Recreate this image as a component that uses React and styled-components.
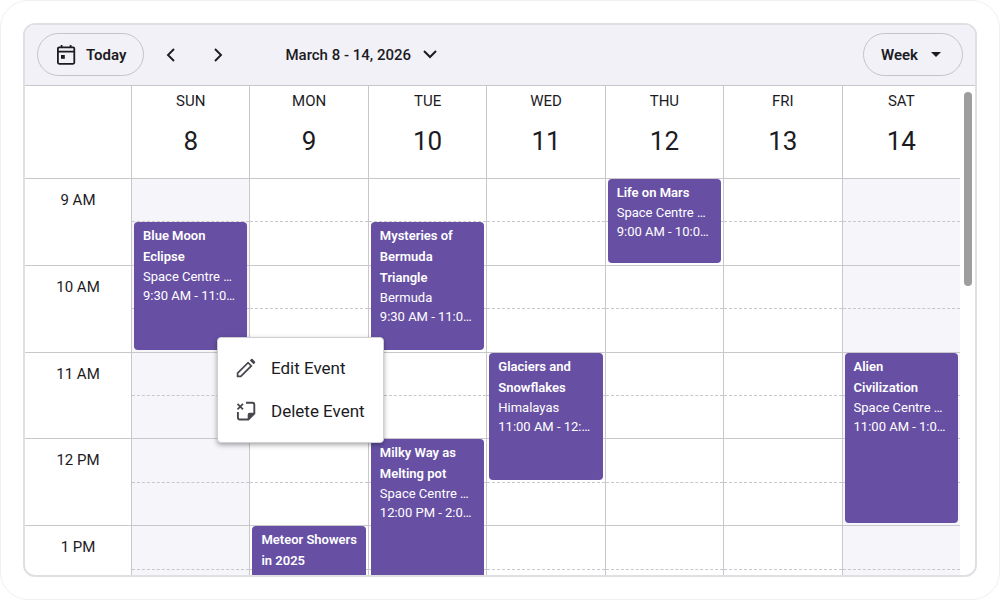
import styled, { createGlobalStyle } from "styled-components";

const HOURS = ["9 AM", "10 AM", "11 AM", "12 PM", "1 PM"];

// start and span are counted in half hours from 9 AM
const DAYS = [
  {
    name: "SUN",
    date: 8,
    weekend: true,
    events: [
      { title: "Blue Moon Eclipse", place: "Space Centre Galaxy", time: "9:30 AM - 11:00 AM", start: 1, span: 3 },
    ],
  },
  {
    name: "MON",
    date: 9,
    events: [
      { title: "Meteor Showers in 2025", place: "Space Centre Galaxy", time: "1:00 PM - 2:30 PM", start: 8, span: 2 },
    ],
  },
  {
    name: "TUE",
    date: 10,
    events: [
      { title: "Mysteries of Bermuda Triangle", place: "Bermuda", time: "9:30 AM - 11:00 AM", start: 1, span: 3 },
      { title: "Milky Way as Melting pot", place: "Space Centre Galaxy", time: "12:00 PM - 2:00 PM", start: 6, span: 4 },
    ],
  },
  {
    name: "WED",
    date: 11,
    events: [
      { title: "Glaciers and Snowflakes", place: "Himalayas", time: "11:00 AM - 12:30 PM", start: 4, span: 3 },
    ],
  },
  {
    name: "THU",
    date: 12,
    events: [
      { title: "Life on Mars", place: "Space Centre Galaxy", time: "9:00 AM - 10:00 AM", start: 0, span: 2 },
    ],
  },
  { name: "FRI", date: 13, events: [] },
  {
    name: "SAT",
    date: 14,
    weekend: true,
    events: [
      { title: "Alien Civilization", place: "Space Centre Galaxy", time: "11:00 AM - 1:00 PM", start: 4, span: 4 },
    ],
  },
];

function App() {
  return (
    <>
      <GlobalStyle />
      <StPage>
        <StCalendar>
          <StToolbar>
            <StPillButton>
              <TodayIcon />
              Today
            </StPillButton>
            <StNav>
              <StIconButton aria-label="Previous week">
                <Chevron d="M8 1 2 7l6 6" />
              </StIconButton>
              <StIconButton aria-label="Next week">
                <Chevron d="M2 1l6 6-6 6" />
              </StIconButton>
            </StNav>
            <StRangeButton>
              March 8 - 14, 2026
              <svg width="14" height="10" viewBox="0 0 14 10" fill="none" stroke="currentColor" strokeWidth="2">
                <path d="M1 1l6 6 6-6" />
              </svg>
            </StRangeButton>
            <StPillButton $end>
              Week
              <svg width="10" height="5" viewBox="0 0 10 5" fill="currentColor">
                <path d="M0 0h10L5 5z" />
              </svg>
            </StPillButton>
          </StToolbar>

          <StBody>
            <StSchedule>
              <StHeaderRow>
                <StCorner />
                {DAYS.map((day) => (
                  <StDayHeader key={day.name}>
                    <StDayName>{day.name}</StDayName>
                    <StDayNumber>{day.date}</StDayNumber>
                  </StDayHeader>
                ))}
              </StHeaderRow>
              <StWeek>
                <StHours>
                  {HOURS.map((hour) => (
                    <StHour key={hour}>{hour}</StHour>
                  ))}
                </StHours>
                {DAYS.map((day) => (
                  <DayColumn key={day.name} day={day} />
                ))}
              </StWeek>
            </StSchedule>
            <StScrollTrack>
              <StScrollThumb />
            </StScrollTrack>
          </StBody>

          <StMenu role="menu">
            <StMenuItem role="menuitem">
              <EditIcon />
              Edit Event
            </StMenuItem>
            <StMenuItem role="menuitem">
              <DeleteIcon />
              Delete Event
            </StMenuItem>
          </StMenu>
        </StCalendar>
      </StPage>
    </>
  );
}

export default App;

function DayColumn({ day }) {
  return (
    <StDayColumn $weekend={day.weekend}>
      {HOURS.flatMap((hour, i) => [
        <StSlot key={hour} $row={i * 2 + 1} $half />,
        <StSlot key={hour + "30"} $row={i * 2 + 2} />,
      ])}
      {day.events.map((event) => (
        <StEvent key={event.title} $start={event.start + 1} $span={event.span}>
          <StEventTitle>{event.title}</StEventTitle>
          <StEventText>{event.place}</StEventText>
          <StEventText>{event.time}</StEventText>
        </StEvent>
      ))}
    </StDayColumn>
  );
}

function Chevron({ d }) {
  return (
    <svg width="10" height="14" viewBox="0 0 10 14" fill="none" stroke="currentColor" strokeWidth="1.9">
      <path d={d} />
    </svg>
  );
}

function TodayIcon() {
  return (
    <svg width="20" height="22" viewBox="0 0 20 22" fill="none" stroke="currentColor" strokeWidth="1.8">
      <rect x="1.9" y="3.4" width="16.4" height="16.4" rx="1.2" />
      <path d="M1.9 7.600h16.400M5.600 1v3M14.600 1v3" />
      <rect x="5" y="11" width="3.800" height="3.800" fill="currentColor" stroke="none" />
    </svg>
  );
}

function EditIcon() {
  return (
    <svg width="20" height="20" viewBox="0 0 20 20" fill="none" stroke="currentColor" strokeWidth="1.7">
      <path d="M1.600 18.400v-3.200L12.100 4.700l3.200 3.200L4.800 18.400z" />
      <path
        d="M13.800 2.400l1.300-1.300a1 1 0 0 1 1.400 0l2.400 2.400a1 1 0 0 1 0 1.400l-1.300 1.300z"
        fill="currentColor"
        stroke="none"
      />
    </svg>
  );
}

function DeleteIcon() {
  return (
    <svg width="20" height="20" viewBox="0 0 20 20" fill="none" stroke="currentColor" strokeWidth="1.9">
      <path d="M10 1.800h6.500a1.800 1.800 0 0 1 1.800 1.800V12.500l-6 6H3.700a1.800 1.800 0 0 1-1.800-1.800V11" />
      <path d="M1.500 2.800l5.500 5.500M7 2.800L1.500 8.300" strokeWidth="1.700" />
      <path d="M11.700 18.500V13.800a2 2 0 0 1 2-2h4.600z" fill="currentColor" stroke="none" />
    </svg>
  );
}

const GlobalStyle = createGlobalStyle`
  * {
    box-sizing: border-box;
  }
  body {
    margin: 0;
    background-color: #fff;
    color: #1c1b1f;
    font-family: Roboto, sans-serif;
  }
  button {
    border: none;
    padding: 0;
    background: none;
    color: inherit;
    font-family: inherit;
    cursor: pointer;
  }
`;

const StPage = styled.main`
  height: 100vh;
  min-height: 400px;
  padding: 22px;
  border: 1px solid #f0f0f0;
  border-radius: 28px;
`;

const StCalendar = styled.section`
  position: relative;
  height: 100%;
  display: flex;
  flex-direction: column;
  border: 2px solid #dfe0e4;
  border-radius: 12px;
  overflow: hidden;
`;

const StToolbar = styled.header`
  display: flex;
  align-items: center;
  flex-shrink: 0;
  height: 61px;
  padding: 0 12px 1px;
  background-color: #f2f1f8;
  border-bottom: 1px solid #c8c7cb;
`;

const StPillButton = styled.button`
  display: flex;
  align-items: center;
  gap: ${(props) => (props.$end ? "13px" : "10px")};
  height: 43px;
  margin-left: ${(props) => (props.$end ? "auto" : "0")};
  padding: ${(props) => (props.$end ? "0 21px 0 17px" : "0 17px 0 18px")};
  border: 1px solid #c4c3c8;
  border-radius: 22px;
  font-size: 15px;
  font-weight: 600;
`;

const StNav = styled.nav`
  display: flex;
  gap: 15px;
  margin-left: 11px;
`;

const StIconButton = styled.button`
  display: flex;
  align-items: center;
  justify-content: center;
  width: 32px;
  height: 32px;
`;

const StRangeButton = styled.button`
  display: flex;
  align-items: center;
  gap: 12px;
  height: 32px;
  margin-left: 51px;
  font-size: 15px;
  font-weight: 500;
`;

const StBody = styled.div`
  display: flex;
  flex: 1;
  min-height: 0;
`;

const StSchedule = styled.div`
  flex: 1;
  min-width: 0;
  overflow: hidden;
`;

const StHeaderRow = styled.div`
  display: grid;
  grid-template-columns: 106px repeat(7, minmax(0, 1fr));
  height: 93px;
  border-bottom: 1px solid #c8c7cb;
`;

const StWeek = styled.div`
  display: grid;
  grid-template-columns: 106px repeat(7, minmax(0, 1fr));
  grid-template-rows: 434px;
`;

const StCorner = styled.div`
  background-color: #fff;
`;

const StDayHeader = styled.div`
  display: flex;
  flex-direction: column;
  align-items: center;
  padding-top: 5px;
  border-left: 1px solid #c8c7cb;
`;

const StDayName = styled.span`
  font-size: 15px;
  line-height: 20px;
`;

const StDayNumber = styled.span`
  margin-top: 12px;
  font-size: 26px;
  line-height: 36px;
`;

const StHours = styled.div`
  display: grid;
  grid-template-rows: repeat(5, minmax(0, 1fr));
`;

const StHour = styled.div`
  padding-top: 11px;
  border-bottom: 1px solid #c8c7cb;
  font-size: 15px;
  line-height: 20px;
  text-align: center;
`;

const StDayColumn = styled.div`
  display: grid;
  grid-template-columns: minmax(0, 1fr);
  grid-template-rows: repeat(10, minmax(0, 1fr));
  border-left: 1px solid #c8c7cb;
  background-color: ${(props) => (props.$weekend ? "#f6f5fa" : "#fff")};
`;

const StSlot = styled.div`
  grid-column: 1;
  grid-row: ${(props) => props.$row};
  border-bottom: 1px ${(props) => (props.$half ? "dashed" : "solid")} #c8c7cb;
`;

const StEvent = styled.article`
  grid-column: 1;
  grid-row: ${(props) => props.$start} / span ${(props) => props.$span};
  margin: 0 2px 3px;
  padding: 3px 8px 0 9px;
  border-radius: 4px;
  background-color: #6750a4;
  color: #fff;
  overflow: hidden;
`;

const StEventTitle = styled.h3`
  margin: 0;
  font-size: 13px;
  font-weight: 600;
  line-height: 21px;
`;

const StEventText = styled.p`
  margin: 0;
  font-size: 13px;
  line-height: 19px;
  white-space: nowrap;
  overflow: hidden;
  text-overflow: ellipsis;
`;

const StScrollTrack = styled.div`
  width: 15px;
  padding: 6px 3px 0 4px;
`;

const StScrollThumb = styled.div`
  height: 194px;
  border-radius: 4px;
  background-color: #9e9e9e;
`;

const StMenu = styled.div`
  position: absolute;
  top: 312px;
  left: 192px;
  display: flex;
  flex-direction: column;
  padding: 8px 0 10px;
  border: 1px solid #d0d0d4;
  border-radius: 4px;
  background-color: #fff;
  box-shadow: 0 2px 5px rgba(0, 0, 0, 0.35);
`;

const StMenuItem = styled.button`
  display: flex;
  align-items: center;
  gap: 15px;
  height: 43px;
  padding: 0 18px;
  font-size: 17px;

  svg {
    color: #49454f;
  }
`;
